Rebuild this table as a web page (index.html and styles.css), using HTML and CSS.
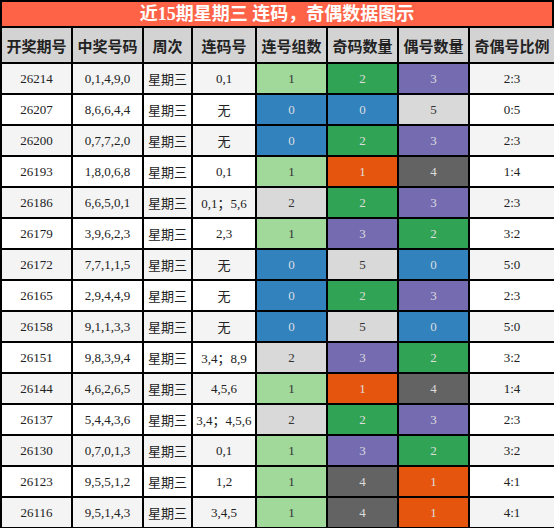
FILE: index.html
```html
<!DOCTYPE html>
<html lang="zh-CN">
<head>
    <meta charset="UTF-8">
    <title>近15期星期三 连码，奇偶数据图示</title>
    <link rel="stylesheet" href="styles.css">
</head>
<body>
    <div class="chart">
        <div class="title">近15期星期三 连码，奇偶数据图示</div>
        <table class="data">
            <colgroup>
                <col class="w-issue"><col class="w-nums"><col class="w-week"><col class="w-link">
                <col class="w-cnt"><col class="w-cnt"><col class="w-cnt"><col class="w-ratio">
            </colgroup>
            <thead>
                <tr>
                    <th>开奖期号</th><th>中奖号码</th><th>周次</th><th>连码号</th>
                    <th>连号组数</th><th>奇码数量</th><th>偶号数量</th><th>奇偶号比例</th>
                </tr>
            </thead>
            <tbody>
                <tr><td>26214</td><td>0,1,4,9,0</td><td class="cn">星期三</td><td>0,1</td><td class="g1">1</td><td class="n2">2</td><td class="n3">3</td><td>2:3</td></tr>
                <tr><td>26207</td><td>8,6,6,4,4</td><td class="cn">星期三</td><td class="cn">无</td><td class="g0">0</td><td class="n0">0</td><td class="n5">5</td><td>0:5</td></tr>
                <tr><td>26200</td><td>0,7,7,2,0</td><td class="cn">星期三</td><td class="cn">无</td><td class="g0">0</td><td class="n2">2</td><td class="n3">3</td><td>2:3</td></tr>
                <tr><td>26193</td><td>1,8,0,6,8</td><td class="cn">星期三</td><td>0,1</td><td class="g1">1</td><td class="n1">1</td><td class="n4">4</td><td>1:4</td></tr>
                <tr><td>26186</td><td>6,6,5,0,1</td><td class="cn">星期三</td><td>0,1；5,6</td><td class="g2">2</td><td class="n2">2</td><td class="n3">3</td><td>2:3</td></tr>
                <tr><td>26179</td><td>3,9,6,2,3</td><td class="cn">星期三</td><td>2,3</td><td class="g1">1</td><td class="n3">3</td><td class="n2">2</td><td>3:2</td></tr>
                <tr><td>26172</td><td>7,7,1,1,5</td><td class="cn">星期三</td><td class="cn">无</td><td class="g0">0</td><td class="n5">5</td><td class="n0">0</td><td>5:0</td></tr>
                <tr><td>26165</td><td>2,9,4,4,9</td><td class="cn">星期三</td><td class="cn">无</td><td class="g0">0</td><td class="n2">2</td><td class="n3">3</td><td>2:3</td></tr>
                <tr><td>26158</td><td>9,1,1,3,3</td><td class="cn">星期三</td><td class="cn">无</td><td class="g0">0</td><td class="n5">5</td><td class="n0">0</td><td>5:0</td></tr>
                <tr><td>26151</td><td>9,8,3,9,4</td><td class="cn">星期三</td><td>3,4；8,9</td><td class="g2">2</td><td class="n3">3</td><td class="n2">2</td><td>3:2</td></tr>
                <tr><td>26144</td><td>4,6,2,6,5</td><td class="cn">星期三</td><td>4,5,6</td><td class="g1">1</td><td class="n1">1</td><td class="n4">4</td><td>1:4</td></tr>
                <tr><td>26137</td><td>5,4,4,3,6</td><td class="cn">星期三</td><td>3,4；4,5,6</td><td class="g2">2</td><td class="n2">2</td><td class="n3">3</td><td>2:3</td></tr>
                <tr><td>26130</td><td>0,7,0,1,3</td><td class="cn">星期三</td><td>0,1</td><td class="g1">1</td><td class="n3">3</td><td class="n2">2</td><td>3:2</td></tr>
                <tr><td>26123</td><td>9,5,5,1,2</td><td class="cn">星期三</td><td>1,2</td><td class="g1">1</td><td class="n4">4</td><td class="n1">1</td><td>4:1</td></tr>
                <tr><td>26116</td><td>9,5,1,4,3</td><td class="cn">星期三</td><td>3,4,5</td><td class="g1">1</td><td class="n4">4</td><td class="n1">1</td><td>4:1</td></tr>
            </tbody>
        </table>
    </div>
</body>
</html>
```

FILE: styles.css
```css
body {
    margin: 0;
    background: #fff;
}

.chart {
    width: 554px;
    font-family: "Liberation Serif", "Noto Sans CJK SC", serif;
    color: #222;
}

.title {
    height: 24px;
    line-height: 24px;
    border: 2px solid #000;
    border-bottom: 0;
    background: #ff6347;
    color: #fff;
    font-family: "Liberation Serif", "Noto Sans CJK SC", sans-serif;
    font-weight: bold;
    font-size: 18px;
    text-align: center;
}

.data {
    width: 554px;
    table-layout: fixed;
    border-collapse: collapse;
    border: 2px solid #000;
}

.w-issue { width: 71px; }
.w-nums { width: 71px; }
.w-week { width: 49px; }
.w-link { width: 64px; }
.w-cnt { width: 71px; }
.w-ratio { width: 86px; }

.data th,
.data td {
    border: 2px solid #000;
    padding: 0;
    text-align: center;
    white-space: nowrap;
}

.data th {
    height: 34px;
    background: #d3d3d3;
    font-family: "Noto Sans CJK SC", sans-serif;
    font-size: 15px;
    font-weight: bold;
    color: #222;
}

.data td {
    height: 29px;
    font-size: 13px;
}

.data tbody tr:nth-child(odd) { background: #f4f4f4; }
.data tbody tr:nth-child(even) { background: #fff; }

.data td.cn {
    font-family: "Noto Sans CJK SC", sans-serif;
    font-size: 13px;
}

/* 连号组数 */
.g0 { background: #3182bd; color: #ddd; }
.g1 { background: #a1d99b; color: #333; }
.g2 { background: #d9d9d9; color: #333; }

/* 奇偶数量 */
.n0 { background: #3182bd; color: #ddd; }
.n1 { background: #e6550d; color: #ddd; }
.n2 { background: #31a354; color: #ddd; }
.n3 { background: #756bb1; color: #ddd; }
.n4 { background: #636363; color: #ddd; }
.n5 { background: #d9d9d9; color: #333; }
```
